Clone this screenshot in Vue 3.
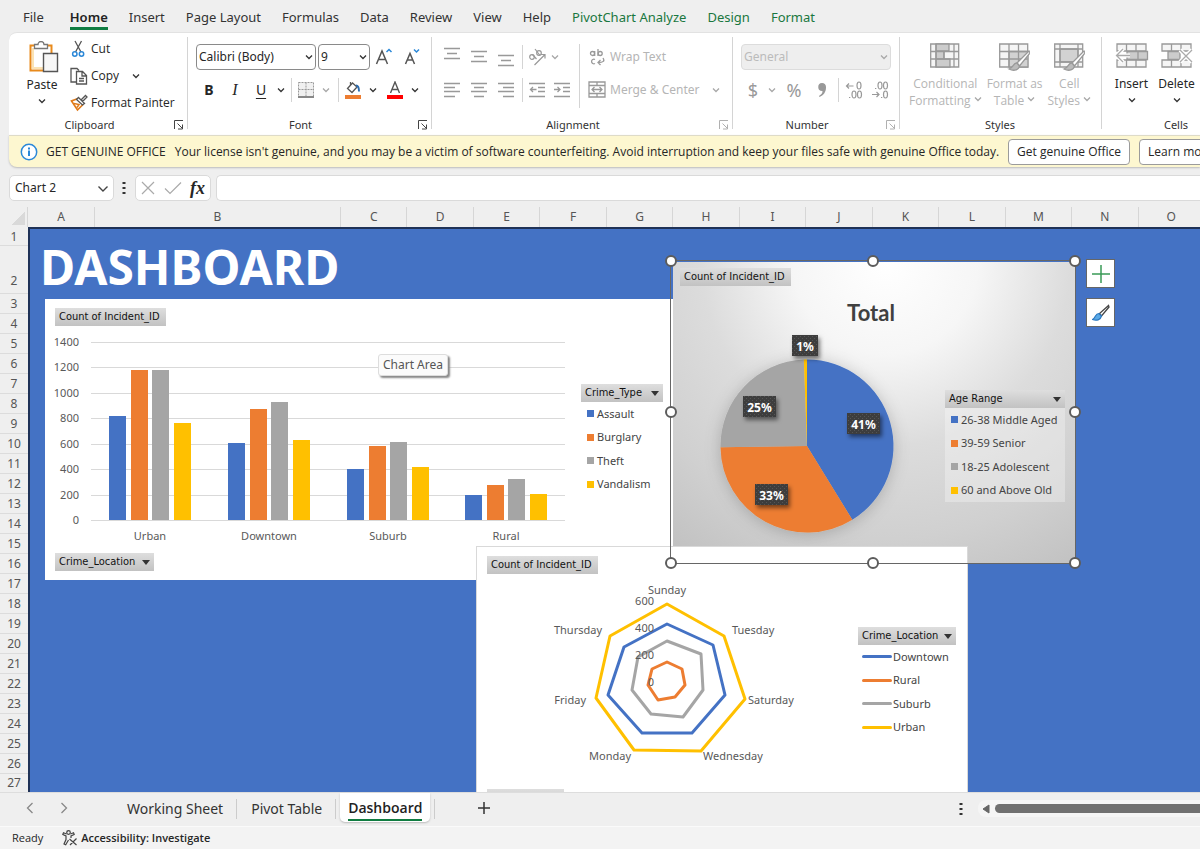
<script setup>
import { ref } from 'vue'

const tabs = ['File', 'Home', 'Insert', 'Page Layout', 'Formulas', 'Data', 'Review', 'View', 'Help', 'PivotChart Analyze', 'Design', 'Format']
const contextual = ['PivotChart Analyze', 'Design', 'Format']
const columns = 'ABCDEFGHIJKLMNO'.split('')
const rows = Array.from({ length: 27 }, (_, i) => i + 1)
const formula = ref('')

const blue = '#4472c4'
const orange = '#ed7d31'
const grey = '#a5a5a5'
const gold = '#ffc000'
const palette = [blue, orange, grey, gold]

const ticks = [1400, 1200, 1000, 800, 600, 400, 200, 0]
const yOf = (v) => Math.round(520 - (v * 178) / 1400)
const locations = [
  { name: 'Urban', x: 109, values: [820, 1180, 1180, 760] },
  { name: 'Downtown', x: 228, values: [605, 873, 930, 630] },
  { name: 'Suburb', x: 347, values: [400, 585, 611, 420] },
  { name: 'Rural', x: 465, values: [197, 275, 322, 203] },
]
const barX = [0, 22, 43, 65]
const crimeTypes = ['Assault', 'Burglary', 'Theft', 'Vandalism']

const ages = ['26-38 Middle Aged', '39-59 Senior', '18-25 Adolescent', '60 and Above Old']
const angles = [0, 148.4, 269.2, 357.9, 360]
const point = (deg) => {
  const a = (deg * Math.PI) / 180
  return `${(807 + 86.5 * Math.sin(a)).toFixed(2)} ${(446 - 86.5 * Math.cos(a)).toFixed(2)}`
}
const slices = palette.map((fill, i) => ({
  fill,
  d: `M807 446L${point(angles[i])}A86.5 86.5 0 0 1 ${point(angles[i + 1])}Z`,
}))
const pieLabels = [
  { t: '41%', x: 847, y: 413, w: 33 },
  { t: '33%', x: 755, y: 484, w: 33 },
  { t: '25%', x: 743, y: 396, w: 33 },
  { t: '1%', x: 792, y: 335, w: 26 },
]

const radar = [
  { name: 'Urban', stroke: gold, pts: '667,604 724,636 745,699 701,751 634,750 596,698 610,636' },
  { name: 'Downtown', stroke: blue, pts: '667,624 713,645 725,695 692,733 642,733 608,695 624,647' },
  { name: 'Suburb', stroke: grey, pts: '667,641 701,654 703,690 683,717 651,714 632,690 638,657' },
  { name: 'Rural', stroke: orange, pts: '667,662 682,669 685,685 675,697 658,700 648,685 652,669' },
]
const radarLegend = [['Downtown', blue], ['Rural', orange], ['Suburb', grey], ['Urban', gold]]
const days = [
  ['Sunday', 667, 594, 'middle'], ['Tuesday', 732, 634, 'start'], ['Saturday', 748, 704, 'start'],
  ['Wednesday', 703, 760, 'start'], ['Monday', 631, 760, 'end'], ['Friday', 586, 704, 'end'], ['Thursday', 602, 634, 'end'],
]
const handles = ['nw', 'n', 'ne', 'w', 'e', 'sw', 's', 'se']
const vAlign = [[0, 3, 0], [0, 3, 3], [0, 3, 7]]
</script>

<template>
  <div class="app">
    <nav class="tabs" aria-label="Ribbon tabs">
      <button v-for="t in tabs" :key="t" class="tab" :class="{ active: t === 'Home', ctx: contextual.includes(t) }">{{ t }}</button>
    </nav>

    <div class="ribbon">
      <section class="group g-clip">
        <div class="body">
          <button class="big paste">
            <svg width="30" height="33" viewBox="0 0 30 33" fill="none">
              <path d="M1.500 4.500h21v25h-21z" fill="#fff" stroke="#e88a1c" stroke-width="2" />
              <path d="M4 7v20h10" stroke="#fbe3b4" stroke-width="2" />
              <path d="M5.500 7.500v-4h3.500a3 3 0 0 1 6 0h3.500v4z" fill="#fff" stroke="#777" stroke-width="1.300" />
              <path d="M14.500 12.500h14v18h-14z" fill="#f7f7f7" stroke="#555" stroke-width="1.400" />
            </svg>
            <span>Paste</span>
            <svg class="chev" viewBox="0 0 8 6"><path d="M1 1.500l3 3 3-3" /></svg>
          </button>
          <div class="stack">
            <button class="line">
              <svg width="18" height="18" viewBox="0 0 18 18" fill="none">
                <path d="M5 1l6 11M11.500 1l-6 11" stroke="#555" stroke-width="1.300" />
                <circle cx="4.800" cy="14" r="2.200" stroke="#2b88d8" stroke-width="1.500" /><circle cx="11.500" cy="14" r="2.200" stroke="#2b88d8" stroke-width="1.500" />
              </svg>Cut
            </button>
            <button class="line">
              <svg width="18" height="18" viewBox="0 0 18 18" fill="none" stroke="#555" stroke-width="1.300">
                <path d="M7 15H1V1.500h6l2 2" /><path d="M6.500 4.500h6l4 4V17h-10zM12 4.500v4.500h4.500M9 11.500h5M9 14h5" />
              </svg>Copy<svg class="chev copychev" viewBox="0 0 8 6"><path d="M1 1.500l3 3 3-3" /></svg>
            </button>
            <button class="line">
              <svg width="18" height="18" viewBox="0 0 18 18" fill="none">
                <path d="M8 4.500L1.500 7l6 9 5.500-5.500" fill="#fff" stroke="#e07b1a" stroke-width="1.700" /><path d="M4 9.500l5 1-2 3" stroke="#e07b1a" stroke-width="1.500" />
                <path d="M8.500 3.500l6 6-2 1.500-6-5.500zM11 6l4.500-4.500 1.500 1.500-4.500 4.500" fill="#fff" stroke="#555" stroke-width="1.300" />
              </svg>Format Painter
            </button>
          </div>
        </div>
        <div class="foot"><span>Clipboard</span><button class="launch" aria-label="Clipboard settings"><svg viewBox="0 0 10 10"><path d="M.500 9V.500H9M3.500 3.500L8.500 8.500M8.500 4.500v4.500h-4.500" /></svg></button></div>
      </section>

      <section class="group g-font">
        <div class="body rowsbody">
          <div class="brow">
            <label class="sel fontname"><select aria-label="Font"><option>Calibri (Body)</option></select><svg class="chev" viewBox="0 0 8 6"><path d="M1 1.500l3 3 3-3" /></svg></label>
            <label class="sel fontsize"><select aria-label="Font size"><option>9</option></select><svg class="chev" viewBox="0 0 8 6"><path d="M1 1.500l3 3 3-3" /></svg></label>
            <button class="ic w28" aria-label="Increase font size"><svg width="18" height="20" viewBox="0 0 18 20" fill="none"><path d="M1.500 17L7 4l5.500 13M3.500 12.500h7" stroke="#555" stroke-width="1.500" /><path d="M11.500 5l2.500-2.500L16.500 5" stroke="#2b88d8" stroke-width="1.500" /></svg></button>
            <button class="ic w28" aria-label="Decrease font size"><svg width="18" height="20" viewBox="0 0 18 20" fill="none"><path d="M2.500 17L7 6.500 11.500 17M4 13h6" stroke="#555" stroke-width="1.500" /><path d="M11 2.500l2.500 2.500L16 2.500" stroke="#2b88d8" stroke-width="1.500" /></svg></button>
          </div>
          <div class="brow">
            <button class="ic w26 bold">B</button><button class="ic w26 ital">I</button><button class="ic w26 und">U</button>
            <button class="ic w14" aria-label="Underline options"><svg class="chev" viewBox="0 0 8 6"><path d="M1 1.500l3 3 3-3" /></svg></button>
            <i class="vr"></i>
            <button class="ic w22" aria-label="Borders"><svg width="16" height="16" viewBox="0 0 16 16" fill="none" stroke="#999"><path d="M.500.500h15v14H.500z" fill="#f0f0f0" stroke-dasharray="2 1" /><path d="M8 .500v14M.500 7.500h15" stroke-dasharray="2 1" /><path d="M0 15h16" stroke="#888" stroke-width="2" /></svg></button>
            <button class="ic w18 dis" aria-label="Border options"><svg class="chev" viewBox="0 0 8 6"><path d="M1 1.500l3 3 3-3" /></svg></button>
            <i class="vr"></i>
            <button class="ic w22" aria-label="Fill color"><svg width="18" height="18" viewBox="0 0 18 18" fill="none"><path d="M8.500 2L3.500 7.500l4.500 4 5-5.500zM6.500 4V1" stroke="#555" stroke-width="1.300" /><path d="M12 4.500c2 0 3 2 3 6" stroke="#2b6cb0" stroke-width="2" /><path d="M1 14h16v4H1z" fill="#ed7d31" /></svg></button>
            <button class="ic w18" aria-label="Fill options"><svg class="chev" viewBox="0 0 8 6"><path d="M1 1.500l3 3 3-3" /></svg></button>
            <button class="ic w26" aria-label="Font color"><svg width="18" height="18" viewBox="0 0 18 18" fill="none"><path d="M4.500 12L9 1l4.500 11M6 8.500h6" stroke="#555" stroke-width="1.400" /><path d="M1 14h16v4H1z" fill="#f00" /></svg></button>
            <button class="ic w14" aria-label="Font color options"><svg class="chev" viewBox="0 0 8 6"><path d="M1 1.500l3 3 3-3" /></svg></button>
          </div>
        </div>
        <div class="foot"><span>Font</span><button class="launch" aria-label="Font settings"><svg viewBox="0 0 10 10"><path d="M.500 9V.500H9M3.500 3.500L8.500 8.500M8.500 4.500v4.500h-4.500" /></svg></button></div>
      </section>

      <section class="group g-align dis">
        <div class="body">
          <div class="rowsbody aleft">
            <div class="brow">
              <button v-for="(v, i) in vAlign" :key="i" class="ic w27" :aria-label="['Top', 'Middle', 'Bottom'][i] + ' align'">
                <svg width="16" height="20" viewBox="0 0 16 20" fill="none" stroke="#999"><path :d="`M0 ${1.5 + v[2]}h16M3 ${6.5 + v[2]}h10M0 ${11.5 + v[2]}h16`" stroke-width="1.300" /></svg>
              </button>
              <i class="vr"></i>
              <button class="ic w22" aria-label="Orientation"><svg width="18" height="18" viewBox="0 0 18 18" fill="none" stroke="#999" stroke-width="1.200"><circle cx="4" cy="9" r="2.300" /><path d="M4.500 6.500l4 4.500M7 1l5 6.500" /><circle cx="11" cy="5" r="2.300" /><path d="M6.500 17L17 6.500M13 6.500h4v4" /></svg></button>
              <button class="ic w14" aria-label="Orientation options"><svg class="chev" viewBox="0 0 8 6"><path d="M1 1.500l3 3 3-3" /></svg></button>
            </div>
            <div class="brow">
              <button class="ic w27" aria-label="Align left"><svg width="16" height="16" viewBox="0 0 16 16" stroke="#999" stroke-width="1.300"><path d="M0 1.500h16M0 5.500h11M0 9.500h16M0 14.500h11" /></svg></button>
              <button class="ic w27" aria-label="Center"><svg width="16" height="16" viewBox="0 0 16 16" stroke="#999" stroke-width="1.300"><path d="M0 1.500h16M3 5.500h10M0 9.500h16M3 14.500h10" /></svg></button>
              <button class="ic w27" aria-label="Align right"><svg width="16" height="16" viewBox="0 0 16 16" stroke="#999" stroke-width="1.300"><path d="M0 1.500h16M5 5.500h11M0 9.500h16M5 14.500h11" /></svg></button>
              <i class="vr"></i>
              <button class="ic w22" aria-label="Decrease indent"><svg width="16" height="16" viewBox="0 0 16 16" fill="none" stroke="#999" stroke-width="1.300"><path d="M0 1.500h16M9 5.500h7M9 9.500h7M0 14.500h16M7.500 7.500h-6M4 5L1.500 7.500 4 10" /></svg></button>
              <button class="ic w27" aria-label="Increase indent"><svg width="16" height="16" viewBox="0 0 16 16" fill="none" stroke="#999" stroke-width="1.300"><path d="M0 1.500h16M9 5.500h7M9 9.500h7M0 14.500h16M0 7.500h6M3.500 5L6 7.500 3.500 10" /></svg></button>
            </div>
          </div>
          <i class="vr tall"></i>
          <div class="rowsbody aright">
            <button class="brow wide">
              <svg width="18" height="18" viewBox="0 0 18 18" fill="none" stroke="#999" stroke-width="1.300"><circle cx="4.500" cy="5.500" r="2" /><path d="M6.700 3v5M10 1v7" /><circle cx="12.200" cy="5.500" r="2" /><path d="M7 11.500a2.300 2.300 0 1 0 0 4M15 10c2 3 .500 4.500-5 4.500M12.500 12L10 14.500l2.500 2.500" /></svg>Wrap Text
            </button>
            <button class="brow wide">
              <svg width="18" height="18" viewBox="0 0 18 18" fill="none" stroke="#999" stroke-width="1.300"><path d="M1 1h16v15H1zM1 4.500h16M1 12.500h16M9 1v3.500M9 12.500V16" /><path d="M4 8.500h10M6.500 6L4 8.500 6.500 11M11.500 6L14 8.500 11.500 11" /></svg>Merge &amp; Center<svg class="chev" viewBox="0 0 8 6"><path d="M1 1.500l3 3 3-3" /></svg>
            </button>
          </div>
        </div>
        <div class="foot"><span>Alignment</span><button class="launch" aria-label="Alignment settings"><svg viewBox="0 0 10 10"><path d="M.500 9V.500H9M3.500 3.500L8.500 8.500M8.500 4.500v4.500h-4.500" /></svg></button></div>
      </section>

      <section class="group g-num dis">
        <div class="body rowsbody">
          <div class="brow"><label class="sel general"><select aria-label="Number format" disabled><option>General</option></select><svg class="chev" viewBox="0 0 8 6"><path d="M1 1.500l3 3 3-3" /></svg></label></div>
          <div class="brow">
            <button class="ic w24 sym">$</button>
            <button class="ic w14" aria-label="Currency options"><svg class="chev" viewBox="0 0 8 6"><path d="M1 1.500l3 3 3-3" /></svg></button>
            <button class="ic w30 sym">%</button>
            <button class="ic w26" aria-label="Comma style"><svg width="10" height="16" viewBox="0 0 10 16"><path d="M5 1a4 4 0 0 1 4 4.500C9 10 6.500 13.500 2.500 15l-.5-1c2.500-1.500 3.500-3 3.500-5A4 4 0 1 1 5 1z" fill="#999" /></svg></button>
            <i class="vr"></i>
            <button class="ic w24" aria-label="Increase decimal"><svg width="18" height="18" viewBox="0 0 18 18" fill="none" stroke="#999" stroke-width="1.200"><path d="M8.500 5H1.500M4 2.500L1.500 5 4 7.500M4 16.500h1.300" /><ellipse cx="14" cy="4.500" rx="2" ry="3.500" /><ellipse cx="9" cy="13.500" rx="2" ry="3.500" /><ellipse cx="14.500" cy="13.500" rx="2" ry="3.500" /></svg></button>
            <button class="ic w28" aria-label="Decrease decimal"><svg width="18" height="18" viewBox="0 0 18 18" fill="none" stroke="#999" stroke-width="1.200"><path d="M1 13.500h7M5.500 11L8 13.500 5.500 16M4 7.500h1.300M10 16.500h1.300" /><ellipse cx="9" cy="4.500" rx="2" ry="3.500" /><ellipse cx="14.500" cy="4.500" rx="2" ry="3.500" /><ellipse cx="14.500" cy="13.500" rx="2" ry="3.500" /></svg></button>
          </div>
        </div>
        <div class="foot"><span>Number</span><button class="launch" aria-label="Number settings"><svg viewBox="0 0 10 10"><path d="M.500 9V.500H9M3.500 3.500L8.500 8.500M8.500 4.500v4.500h-4.500" /></svg></button></div>
      </section>

      <section class="group g-styles dis">
        <div class="body">
          <button class="big two">
            <svg width="30" height="28" viewBox="0 0 30 28" fill="none" stroke="#999" stroke-width="1.300"><path d="M.700 1h28v23h-28z" fill="#f5f5f5" /><path d="M6 1h13v7H6zM6 8h8v8H6zM6 16h14v8H6z" fill="#ccc" /><path d="M.700 8.500h28M.700 16h28M6 1v23M14 8v8M24 1v23" /></svg>
            <span>Conditional<br />Formatting <svg class="chev" viewBox="0 0 8 6"><path d="M1 1.500l3 3 3-3" /></svg></span>
          </button>
          <button class="big two">
            <svg width="31" height="28" viewBox="0 0 31 28" fill="none" stroke="#999" stroke-width="1.300"><path d="M.700 1h28v23h-28z" fill="#f5f5f5" /><path d="M10 8.500h19V24H10z" fill="#d2d2d2" /><path d="M.700 8.500h28M.700 16h28M10 1v23M19.500 1v23" /><path d="M30 8L18 20l2.500 3L31 10z" fill="#fff" /><path d="M18 20c-4-.500-3 4.500-8 6 5 2.500 10 1 10.500-3z" fill="#bbb" /></svg>
            <span>Format as<br />Table <svg class="chev" viewBox="0 0 8 6"><path d="M1 1.500l3 3 3-3" /></svg></span>
          </button>
          <button class="big two">
            <svg width="31" height="28" viewBox="0 0 31 28" fill="none" stroke="#999" stroke-width="1.300"><path d="M.700 1h28v23h-28z" fill="#f5f5f5" /><path d="M6 6h18v13H6z" fill="#d2d2d2" /><path d="M.700 6h28M.700 19h28M6 1v23M24 1v23" /><path d="M30 8L18 20l2.500 3L31 10z" fill="#fff" /><path d="M18 20c-4-.500-3 4.500-8 6 5 2.500 10 1 10.500-3z" fill="#bbb" /></svg>
            <span>Cell<br />Styles <svg class="chev" viewBox="0 0 8 6"><path d="M1 1.500l3 3 3-3" /></svg></span>
          </button>
        </div>
        <div class="foot"><span>Styles</span></div>
      </section>

      <section class="group g-cells">
        <div class="body">
          <button class="big">
            <svg width="34" height="28" viewBox="0 0 34 28" fill="none" stroke="#999" stroke-width="1.300"><path d="M2 1h29v7H2zM2 17h29v7H2zM11.500 1v7M21 1v7M11.500 17v7M21 17v7" fill="#f5f5f5" /><path d="M12 8.500h20.500v8H12zM23 8.500v8" fill="#ccc" /><path d="M15 12.500H1.500M8 6l-6.500 6.500L8 19" stroke="#fff" stroke-width="4" /><path d="M15 12.500H1.500M8 6l-6.500 6.500L8 19" stroke="#aaa" /></svg>
            <span>Insert</span><svg class="chev" viewBox="0 0 8 6"><path d="M1 1.500l3 3 3-3" /></svg>
          </button>
          <button class="big">
            <svg width="34" height="28" viewBox="0 0 34 28" fill="none" stroke="#999" stroke-width="1.300"><path d="M2 1h29v7H2zM2 17h29v7H2zM11.500 1v7M21 1v7M11.500 17v7M21 17v7" fill="#f5f5f5" /><path d="M8 8.500h12v8H8z" fill="#ccc" /><path d="M20 7l12 12M32 7L20 19" stroke="#fff" stroke-width="4" /><path d="M20 7l12 12M32 7L20 19" stroke="#aaa" /></svg>
            <span>Delete</span><svg class="chev" viewBox="0 0 8 6"><path d="M1 1.500l3 3 3-3" /></svg>
          </button>
        </div>
        <div class="foot"><span>Cells</span></div>
      </section>
    </div>

    <div class="notice">
      <svg width="18" height="18" viewBox="0 0 18 18"><circle cx="9" cy="9" r="7.700" fill="#fff" stroke="#2b88d8" stroke-width="1.500" /><path d="M8 7.500h2V13H8zM8 4.500h2v2H8z" fill="#2b88d8" /></svg>
      <strong>GET GENUINE OFFICE</strong>
      <span>Your license isn't genuine, and you may be a victim of software counterfeiting. Avoid interruption and keep your files safe with genuine Office today.</span>
      <button>Get genuine Office</button>
      <button>Learn more</button>
    </div>

    <div class="fbar">
      <label class="sel namebox"><select aria-label="Name box"><option>Chart 2</option></select><svg width="12" height="8" viewBox="0 0 12 8" fill="none" stroke="#444" stroke-width="1.400"><path d="M1.500 1.500L6 6l4.500-4.500" /></svg></label>
      <svg class="dots" width="4" height="14" viewBox="0 0 4 14" fill="#333"><path d="M.500 1h3v2h-3zM.500 6h3v2h-3zM.500 11h3v2h-3z" /></svg>
      <div class="fxbox">
        <button aria-label="Cancel"><svg width="14" height="14" viewBox="0 0 14 14" stroke="#aaa" stroke-width="1.200"><path d="M1 1l12 12M13 1L1 13" /></svg></button>
        <button aria-label="Enter"><svg width="18" height="14" viewBox="0 0 18 14" fill="none" stroke="#aaa" stroke-width="1.200"><path d="M1 7.500l5 5L17 1.500" /></svg></button>
        <button class="fx">fx</button>
      </div>
      <input v-model="formula" class="formula" type="text" aria-label="Formula" />
    </div>

    <main class="sheet">
      <div class="colhead">
        <span class="corner"></span>
        <span v-for="c in columns" :key="c">{{ c }}</span>
      </div>
      <div class="grid">
        <div class="rowhead"><span v-for="r in rows" :key="r" :class="{ high: r === 2 }">{{ r }}</span></div>
        <div class="canvas">
          <h1>DASHBOARD</h1>

          <section class="chart bar" aria-label="Incidents by location and type">
            <svg width="628" height="281" viewBox="45 299 628 281">
              <g v-for="t in ticks" :key="t">
                <path :d="`M91 ${yOf(t) + 0.5}H565`" stroke="#d9d9d9" />
                <text :x="79" :y="yOf(t) + 4" text-anchor="end">{{ t }}</text>
              </g>
              <g v-for="l in locations" :key="l.name">
                <rect v-for="(v, i) in l.values" :key="i" :x="l.x + barX[i]" :y="yOf(v)" width="17" :height="520 - yOf(v)" :fill="palette[i]" />
                <text :x="l.x + 41" y="540" text-anchor="middle">{{ l.name }}</text>
              </g>
            </svg>
            <button class="field f1">Count of Incident_ID</button>
            <button class="field f2">Crime_Location<i></i></button>
            <div class="legend l1">
              <button class="field">Crime_Type<i></i></button>
              <ul><li v-for="(c, i) in crimeTypes" :key="c"><b :style="{ background: palette[i] }"></b>{{ c }}</li></ul>
            </div>
            <div class="tip" role="tooltip">Chart Area</div>
          </section>

          <section class="chart pie" aria-label="Incidents by age range">
            <svg width="402" height="301" viewBox="673 262 402 301">
              <defs>
                <pattern id="weave" width="4" height="4" patternUnits="userSpaceOnUse"><rect width="4" height="4" fill="#3d3d3d" /><path d="M0 0h1v1H0zM2 2h1v1H2z" fill="#555" /></pattern>
                <filter id="soft" x="-20%" y="-20%" width="140%" height="150%"><feDropShadow dx="0" dy="2" stdDeviation="8" flood-opacity=".2" /></filter>
                <filter id="drop" x="-20%" y="-20%" width="160%" height="170%"><feDropShadow dx="2" dy="3" stdDeviation="2" flood-opacity=".5" /></filter>
              </defs>
              <g filter="url(#soft)"><path v-for="s in slices" :key="s.fill" :d="s.d" :fill="s.fill" /></g>
              <text class="title" x="871" y="321" text-anchor="middle">Total</text>
              <g v-for="p in pieLabels" :key="p.t">
                <rect :x="p.x" :y="p.y" :width="p.w" height="21" fill="url(#weave)" filter="url(#drop)" />
                <text class="pct" :x="p.x + p.w / 2" :y="p.y + 16" text-anchor="middle">{{ p.t }}</text>
              </g>
            </svg>
            <button class="field f3">Count of Incident_ID</button>
            <div class="legend l2">
              <button class="field">Age Range<i></i></button>
              <ul><li v-for="(a, i) in ages" :key="a"><b :style="{ background: palette[i] }"></b>{{ a }}</li></ul>
            </div>
          </section>

          <section class="chart radar" aria-label="Incidents by weekday and location">
            <svg width="490" height="260" viewBox="477 547 490 260">
              <polygon v-for="r in radar" :key="r.name" :points="r.pts" :stroke="r.stroke" fill="none" stroke-width="3" stroke-linejoin="round" />
              <text v-for="d in days" :key="d[0]" :x="d[1]" :y="d[2]" :text-anchor="d[3]">{{ d[0] }}</text>
              <text v-for="n in [0, 1, 2, 3]" :key="n" x="654" :y="686 - n * 27" text-anchor="end">{{ n * 200 }}</text>
            </svg>
            <button class="field f4">Count of Incident_ID</button>
            <button class="field f5" aria-label="Weekday"></button>
            <div class="legend l3">
              <button class="field">Crime_Location<i></i></button>
              <ul><li v-for="r in radarLegend" :key="r[0]"><b :style="{ background: r[1] }"></b>{{ r[0] }}</li></ul>
            </div>
          </section>

          <div class="frame"><i v-for="h in handles" :key="h" :class="h"></i></div>
          <div class="tools">
            <button aria-label="Chart elements"><svg width="18" height="18" viewBox="0 0 18 18" stroke="#3a9b57" stroke-width="1.500"><path d="M9 0v18M0 9h18" /></svg></button>
            <button aria-label="Chart styles"><svg width="18" height="18" viewBox="0 0 18 18" fill="none"><path d="M16.500 1.500L7.500 9.500l2 2.500 7.500-9z" fill="#fff" stroke="#444" stroke-width="1.300" /><path d="M7 9.500c-4 0-3 4-6.500 6 4 1.500 8 .500 9-3.500z" fill="#5aa9e6" stroke="#2b78c0" stroke-width="1.200" /></svg></button>
          </div>
        </div>
      </div>
    </main>

    <div class="sheets">
      <button class="arrow" aria-label="Previous sheet"><svg width="8" height="12" viewBox="0 0 8 12"><path d="M6.500 1L1.500 6l5 5" /></svg></button>
      <button class="arrow" aria-label="Next sheet"><svg width="8" height="12" viewBox="0 0 8 12"><path d="M1.500 1l5 5-5 5" /></svg></button>
      <button class="st first">Working Sheet</button>
      <button class="st">Pivot Table</button>
      <button class="st on"><span>Dashboard</span></button>
      <button class="add" aria-label="New sheet"><svg width="12" height="12" viewBox="0 0 12 12" stroke="#333" stroke-width="1.500"><path d="M6 0v12M0 6h12" /></svg></button>
      <svg class="more" width="4" height="14" viewBox="0 0 4 14" fill="#333"><path d="M.500 1h3v2h-3zM.500 6h3v2h-3zM.500 11h3v2h-3z" /></svg>
      <div class="scroll"><svg width="8" height="10" viewBox="0 0 8 10"><path d="M7 1v8L1 5z" fill="#666" stroke="#666" stroke-linejoin="round" /></svg><i></i></div>
    </div>

    <footer class="status">
      <span>Ready</span>
      <svg width="16" height="16" viewBox="0 0 16 16" fill="none" stroke="#444" stroke-width="1.200"><circle cx="6.500" cy="2.500" r="1.800" /><path d="M4.500 4L1.500 2.800.800 4.500 4 6v3.500L2 14l1.700.800L6.500 10M8.500 4l3-1.200.700 1.700L9 6v2M7.500 9l7 6M14.500 8.500L8 15" /></svg>
      <strong>Accessibility: Investigate</strong>
    </footer>
  </div>
</template>

<style>
html, body { margin: 0; overflow: hidden; }
</style>

<style scoped>
.app {
  --ui: "Noto Sans", "Open Sans", sans-serif;
  --alt: "Open Sans", "Noto Sans", sans-serif;
  display: flex;
  flex-direction: column;
  height: 100vh;
  overflow: hidden;
  background: #efefef;
  color: #262626;
  font: 12px/16px var(--ui);
}
button, select, input { font: inherit; color: inherit; background: none; border: 0; padding: 0; margin: 0; border-radius: 0; }
button { white-space: nowrap; }
svg { flex: none; display: block; }

.tabs { display: flex; gap: 21px; padding: 0 23px; height: 32px; flex: none; box-sizing: border-box; }
.tab { font-size: 13px; line-height: 20px; padding: 4px 0 0; height: 29px; box-sizing: border-box; color: #333; }
.tab.active { font-weight: 600; margin: 0 0 0 5px; padding-top: 7px; height: 30px; border-bottom: 3px solid #107c41; color: #222; }
.tab.ctx { color: #1a7740; }

.ribbon { display: flex; flex: none; margin-left: 9px; background: #fff; border-top: 1px solid #e2e2e2; border-top-left-radius: 8px; overflow: hidden; }
.group { position: relative; display: flex; flex-direction: column; flex: none; box-sizing: border-box; padding-top: 2px; }
.group + .group::before { content: ""; position: absolute; left: 0; top: 4px; bottom: 6px; border-left: 1px solid #d4d4d4; }
.g-clip { width: 178px; }
.g-font { width: 244px; }
.g-align { width: 301px; }
.g-num { width: 167px; }
.g-styles { width: 202px; }
.g-cells { width: 150px; flex-grow: 1; }
.body { display: flex; height: 79px; }
.foot { display: flex; align-items: center; height: 21px; font-size: 11px; color: #333; }
.foot span { flex: 1; text-align: center; }
.launch { width: 17px; }
.launch svg { width: 10px; height: 10px; margin-left: 4px; fill: none; stroke: #444; }
.dis { color: #b5b5b5; }
.dis .launch svg { stroke: #b0b0b0; }
.dis .foot { color: #333; }
.chev { width: 8px; height: 6px; fill: none; stroke: #333; stroke-width: 1.300; }
.dis .chev { stroke: #a8a8a8; }
.big { display: flex; flex-direction: column; align-items: center; }
.big .chev { margin-top: 5px; }
.paste { width: 66px; padding-top: 6px; }
.paste > svg:first-child { margin: 0 0 3px 4px; }
.stack { font-family: var(--alt); }
.line { display: flex; align-items: center; gap: 3px; height: 27px; width: 100%; margin-left: -5px; }
.copychev { margin-left: 10px; }
.rowsbody { flex-direction: column; }
.brow { display: flex; align-items: center; height: 33px; }
.brow:first-child { margin-top: 5px; }
.sel { position: relative; display: flex; box-sizing: border-box; height: 26px; border: 1px solid #8a8a8a; border-radius: 4px; background: #fff; }
.sel select { width: 100%; appearance: none; padding: 0 16px 0 2px; opacity: 1; }
.sel svg { position: absolute; right: 2px; top: 9px; pointer-events: none; }
.g-font .body, .g-num .body { padding-left: 9px; }
.fontname { width: 120px; margin-right: 2px; }
.fontsize { width: 52px; }
.general { width: 150px; background: #eee; border-color: #dcdcdc; color: #bbb; }
.ic { display: flex; align-items: center; justify-content: center; height: 24px; }
.w14 { width: 14px; } .w18 { width: 18px; } .w22 { width: 22px; } .w24 { width: 24px; } .w26 { width: 26px; } .w27 { width: 27px; } .w28 { width: 28px; } .w30 { width: 30px; }
.bold { font-weight: 700; font-size: 14px; }
.ital { font: italic 16px "Liberation Serif", serif; }
.und { font-size: 14px; text-decoration: underline; text-underline-offset: 3px; }
.sym { font-size: 18px; color: #999; }
.vr { width: 1px; height: 24px; background: #d4d4d4; margin: 0 3px; }
.vr.tall { height: 64px; margin: 9px 8px 0 0; }
.aleft { width: 141px; padding-left: 7px; }
.wide { width: 130px; gap: 4px; }
.wide .chev { margin-left: 8px; }
.g-styles .body { justify-content: center; gap: 5px; font-family: var(--alt); }
.g-styles .big { padding-top: 8px; }
.g-styles .big span { margin-top: 4px; }
.two { text-align: center; line-height: 17px; }
.big .chev { flex: none; }
.two .chev { display: inline-block; margin: 0 0 3px; }
.g-cells .big { width: 45px; padding-top: 8px; }
.g-cells .body { padding-left: 8px; }
.g-cells .big span { margin-top: 5px; }

.notice { display: flex; align-items: center; flex: none; margin-left: 9px; height: 31px; padding-left: 11px; background: #fdf7d0; border-top: 1px solid #dedbc8; border-bottom-left-radius: 8px; box-shadow: 0 1px 2px #bbb; white-space: nowrap; overflow: hidden; font-family: var(--alt); }
.notice strong { font-weight: 500; margin: 0 9px 0 8px; }
.notice button { margin-left: 9px; padding: 0 8px; height: 26px; box-sizing: border-box; background: #fff; border: 1px solid #9b9b9b; border-radius: 4px; }

.fbar { display: flex; flex: none; align-items: center; margin: 8px 0 6px 9px; height: 26px; }
.namebox, .fxbox, .formula { height: 26px; box-sizing: border-box; border: 1px solid #dadada; border-radius: 5px; background: #fff; }
.namebox { width: 105px; }
.namebox select { padding-left: 5px; }
.namebox svg { right: 4px; top: 9px; }
.dots { margin: 0 9px 0 8px; }
.fxbox { display: flex; align-items: center; width: 76px; padding: 0 5px; justify-content: space-between; }
.fx { font: italic bold 18px "Liberation Serif", serif; }
.formula { flex: 1; margin-left: 5px; border-right: 0; border-radius: 5px 0 0 5px; padding: 0 6px; }

.sheet { flex: 1; min-height: 0; display: flex; flex-direction: column; overflow: hidden; }
.colhead { display: grid; grid-template-columns: 28px 67px 246px repeat(13, 1fr); margin-right: -5px; height: 20px; flex: none; }
.colhead span { text-align: center; line-height: 20px; color: #555; border-right: 1px solid #d6d6d6; box-sizing: border-box; }
.colhead .corner { background: linear-gradient(135deg, transparent 50%, #d9d9d9 50%) 12px 5px / 13px 13px no-repeat; }
.grid { display: flex; flex: 1; min-height: 0; }
.rowhead { width: 28px; flex: none; overflow: hidden; }
.rowhead span { display: block; height: 20px; line-height: 20px; box-sizing: border-box; border-bottom: 1px solid #dcdcdc; text-align: center; color: #555; }
.rowhead .high { height: 48px; padding-top: 25px; }
.rowhead span:first-child { height: 19px; }
.rowhead span:last-child { height: 18px; line-height: 18px; border-bottom: 0; }
.canvas { position: relative; flex: 1; overflow: hidden; background: #4472c4; border-left: 2px solid #1f3257; border-top: 2px solid #1f3257; }
h1 { margin: 6px 0 0 10px; font: 700 48px/64px "Noto Sans", sans-serif; color: #fff; }
.chart { position: absolute; background: #fff; font-size: 11px; color: #444; }
.chart text { fill: #595959; font-size: 11px; }
.bar { left: 15px; top: 70px; width: 628px; height: 281px; }
.pie { left: 643px; top: 33px; width: 402px; height: 301px; background: radial-gradient(circle at 53% 0, #fff 0, #f6f6f6 25%, #dcdcdc 50%, #d0d0d0 75%, #bfbfbf 100%); }
.radar { left: 447px; top: 318px; width: 490px; height: 290px; box-shadow: 0 0 0 1px #d9d9d9; }
.field { display: flex; align-items: center; justify-content: space-between; height: 18px; padding: 0 4px; box-sizing: border-box; background: linear-gradient(#dedede, #c2c2c2); color: #111; font: 11px/18px "DejaVu Sans Condensed", "DejaVu Sans", sans-serif; }
.field i { border: 4px solid transparent; border-top: 5px solid #333; border-bottom: 0; }
.f1, .f2, .f3, .f4, .f5, .legend, .tip { position: absolute; }
.f1, .f3, .f4 { width: 111px; }
.f1 { left: 10px; top: 9px; }
.f2 { left: 10px; top: 254px; width: 99px; }
.f3 { left: 7px; top: 6px; }
.f4 { left: 10px; top: 9px; }
.f5 { left: 10px; top: 242px; width: 77px; }
.legend .field { width: 100%; }
.legend ul { list-style: none; margin: 0; padding: 0; height: 94px; display: flex; flex-direction: column; }
.legend li { display: flex; align-items: center; flex: 1; gap: 3px; white-space: nowrap; }
.legend b { width: 7px; height: 7px; }
.l1 { left: 536px; top: 85px; width: 82px; }
.l1 li, .l2 li { padding-left: 6px; }
.l2 { left: 272px; top: 128px; width: 120px; background: #ffffff4d; }
.l3 { left: 381px; top: 80px; width: 98px; }
.l3 li { gap: 1px; padding-left: 4px; }
.l3 b { width: 30px; height: 3px; border-radius: 2px; }
.tip { left: 333px; top: 55px; width: 70px; height: 22px; line-height: 20px; box-sizing: border-box; border: 1px solid #ddd; border-radius: 3px; background: #fbfbfb; box-shadow: 2px 2px 2px #888; font-size: 12px; text-align: center; color: #555; white-space: nowrap; }
.chart text.title { font: 700 22px Lato, "Noto Sans", sans-serif; fill: #404040; }
.chart text.pct { font: 700 12px "Noto Sans", sans-serif; fill: #fff; }
.frame { position: absolute; left: 640px; top: 31px; width: 404px; height: 302px; border: 1px solid #666; pointer-events: none; }
.frame i { position: absolute; width: 8px; height: 8px; border: 2px solid #5c5c5c; border-radius: 50%; background: #fff; transform: translate(-50%, -50%); left: 0; top: 0; }
.frame .n, .frame .s { left: 50%; }
.frame .ne, .frame .e, .frame .se { left: 100%; }
.frame .w, .frame .e { top: 50%; }
.frame .sw, .frame .s, .frame .se { top: 100%; }
.tools { position: absolute; left: 1056px; top: 30px; display: flex; flex-direction: column; gap: 10px; }
.tools button { display: flex; align-items: center; justify-content: center; width: 29px; height: 29px; border: 1px solid #666; background: #fff; box-sizing: border-box; }

.sheets { display: flex; flex: none; height: 33px; padding-left: 13px; border-top: 1px solid #ddd; align-items: flex-start; }
.arrow { width: 34px; height: 30px; display: flex; align-items: center; justify-content: center; }
.arrow svg { fill: none; stroke: #888; stroke-width: 1.300; }
.st { position: relative; font-size: 14px; line-height: 22px; padding: 5px 14px; color: #333; }
.st::after { content: ""; position: absolute; right: 0; top: 6px; height: 20px; border-right: 1px solid #ccc; }
.first { margin-left: 32px; }
.on { padding: 0 8px; margin-left: 4px; height: 29px; background: #fff; border-radius: 0 0 5px 5px; font-family: var(--alt); font-weight: 600; box-shadow: 0 1px 2px #bbb; color: #222; }
.on span { display: block; border-bottom: 2px solid #107c41; height: 24px; line-height: 26px; }
.on::after { right: -5px; }
.add { margin: 9px auto 0 48px; }
.more { margin: 9px 15px 0 0; }
.scroll { display: flex; align-items: center; gap: 5px; width: 222px; height: 17px; margin-top: 7px; padding-left: 4px; box-sizing: border-box; background: #f5f5f5; border-radius: 8px 0 0 8px; }
.scroll i { flex: 1; height: 9px; background: #707070; border-radius: 5px 0 0 5px; }
.status { display: flex; align-items: center; flex: none; height: 22px; padding-left: 12px; background: #f3f3f3; border-top: 1px solid #fafafa; font: 11px/16px var(--alt); }
.status svg { margin: 0 3px 0 19px; }
.status strong { font-weight: 600; }
</style>
